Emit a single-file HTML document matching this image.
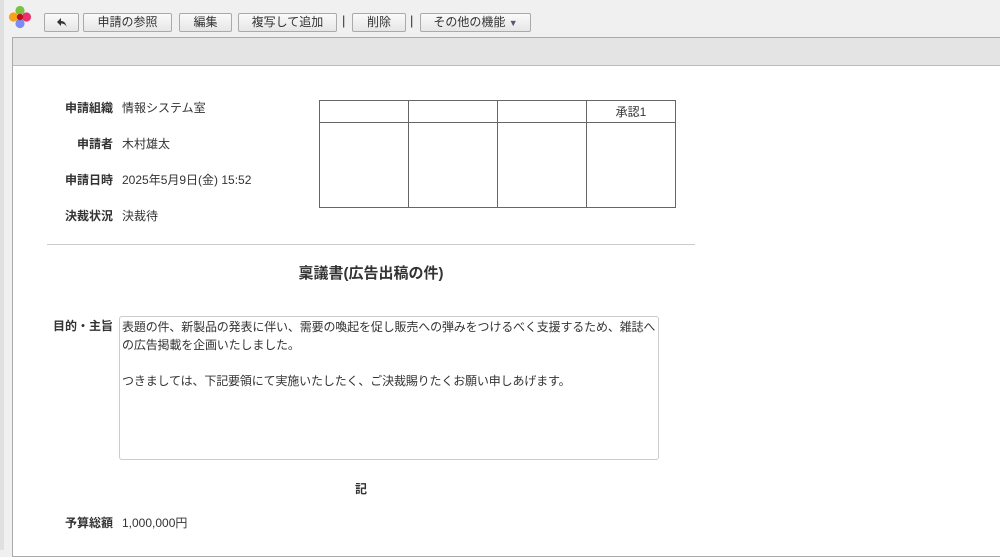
<!DOCTYPE html>
<html><head><meta charset="utf-8"><style>
*{box-sizing:border-box;margin:0;padding:0}
body{width:1000px;height:550px;overflow:hidden;background:#f0f0f0;font-family:"Liberation Sans","Noto Sans CJK JP",sans-serif;font-size:12px;color:#333;position:relative}
.strip{position:absolute;left:0;top:0;width:4px;height:550px;background:#e0e0e0}
.btn{position:absolute;top:13px;height:19px;border:1px solid #aaa;border-radius:2px;background:linear-gradient(#fafafa,#e6e6e6);font-size:12px;line-height:17px;text-align:center;color:#333}
.sep{position:absolute;top:13px;font-size:13px;color:#333}
.panel{position:absolute;left:12px;top:37px;width:990px;height:520px;border:1px solid #aaa;background:#fff}
.band{position:absolute;left:0;top:0;right:0;height:28px;background:#e4e4e4;border-bottom:1px solid #bbb}
.lbl{position:absolute;width:80px;text-align:right;font-weight:bold;color:#333}
.val{position:absolute;color:#333}
.abs{position:absolute}
table{border-collapse:collapse;position:absolute;left:319px;top:100px}
td{border:1px solid #666;width:89px;padding:0;font-size:12px;text-align:center}
</style></head><body>
<div class="strip"></div>
<svg class="abs" style="left:7px;top:4px" width="26" height="26" viewBox="0 0 26 26">
<circle cx="13" cy="6.5" r="4.6" fill="#7cc242"/><circle cx="19.5" cy="13" r="4.6" fill="#e8336d"/><circle cx="13" cy="19.5" r="4.6" fill="#7a8cf0"/><circle cx="6.5" cy="13" r="4.6" fill="#f7a21b"/><circle cx="13" cy="13" r="3.2" fill="#c0111a"/></svg>
<div class="btn" style="left:44px;width:35px"><svg width="12" height="12" viewBox="0 0 12 12" style="margin-top:3px"><path d="M5 1L1 5l4 4V6.5c3 0 4.5 1 5.5 3.5C10 6 8 4 5 4z" fill="#333"/></svg></div>
<div class="btn" style="left:83px;width:89px">申請の参照</div>
<div class="btn" style="left:179px;width:53px">編集</div>
<div class="btn" style="left:238px;width:99px">複写して追加</div>
<div class="sep" style="left:342px">|</div>
<div class="btn" style="left:352px;width:54px">削除</div>
<div class="sep" style="left:410px">|</div>
<div class="btn" style="left:420px;width:111px">その他の機能 <span style="font-size:9px;color:#557">▼</span></div>
<div class="panel"><div class="band"></div></div>
<div class="lbl" style="left:33px;top:99px">申請組織</div><div class="val" style="left:122px;top:99px">情報システム室</div>
<div class="lbl" style="left:33px;top:135px">申請者</div><div class="val" style="left:122px;top:135px">木村雄太</div>
<div class="lbl" style="left:33px;top:171px">申請日時</div><div class="val" style="left:122px;top:171px">2025年5月9日(金) 15:52</div>
<div class="lbl" style="left:33px;top:207px">決裁状況</div><div class="val" style="left:122px;top:207px">決裁待</div>
<table><tr style="height:22px"><td></td><td></td><td></td><td>承認1</td></tr><tr style="height:85px"><td></td><td></td><td></td><td></td></tr></table>
<div class="abs" style="left:47px;top:244px;width:648px;height:1px;background:#ccc"></div>
<div class="abs" style="left:47px;top:262px;width:648px;text-align:center;font-weight:bold;font-size:15px;color:#333">稟議書(広告出稿の件)</div>
<div class="lbl" style="left:33px;top:317px">目的・主旨</div>
<div class="abs" style="left:119px;top:316px;width:540px;height:144px;border:1px solid #ccc;border-radius:3px;padding:1px 0 1px 2px;line-height:18px;color:#333;white-space:nowrap;overflow:hidden;letter-spacing:-0.15px">表題の件、新製品の発表に伴い、需要の喚起を促し販売への弾みをつけるべく支援するため、雑誌へ<br>の広告掲載を企画いたしました。<br><br>つきましては、下記要領にて実施いたしたく、ご決裁賜りたくお願い申しあげます。</div>
<div class="abs" style="left:355px;top:480px;font-weight:bold">記</div>
<div class="lbl" style="left:33px;top:514px">予算総額</div><div class="val" style="left:122px;top:514px">1,000,000円</div>
</body></html>
